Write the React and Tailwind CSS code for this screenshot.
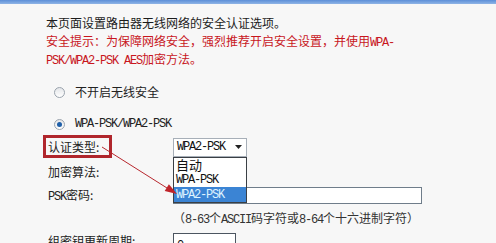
import React from 'react';

const cjk = { fontFamily: '"Noto Sans CJK SC", "Liberation Sans", sans-serif' };
const mono = { fontFamily: '"Liberation Mono", "Noto Sans CJK SC", monospace' };

function Latin({ children }) {
  return (
    <span style={mono} className="text-[12px] leading-none tracking-[-1.2px]">
      {children}
    </span>
  );
}

function Radio({ checked }) {
  return (
    <span className="w-[11px] h-[11px] rounded-full border border-[#9aa3ad] bg-gradient-to-b from-[#e4e6e9] to-[#ffffff] flex items-center justify-center">
      {checked && <span className="w-[5px] h-[5px] rounded-full bg-[#1f5fa8]" />}
    </span>
  );
}

function Row({ label, children, className = '' }) {
  return (
    <div className={`flex items-center ${className}`}>
      <div className="w-[127px] pl-[2px] text-[12px] leading-[16px] text-[#222]">{label}</div>
      {children}
    </div>
  );
}

export default function App() {
  return (
    <div className="relative w-[496px] h-[243px] overflow-hidden bg-[#f7f7f7]" style={cjk}>
      <div className="h-[4px] bg-gradient-to-b from-[#5c8fd8] to-[#8fb4e6]" />
      <div className="pl-[46px]">
        <div className="mt-[10px] text-[12px]">
          <div className="h-[18px] leading-[18px] text-[#1c1c1c]">本页面设置路由器无线网络的安全认证选项。</div>
          <div className="h-[18px] leading-[18px] text-[#c8161d]">
            安全提示：为保障网络安全，强烈推荐开启安全设置，并使用<Latin>WPA-</Latin>
          </div>
          <div className="h-[18px] leading-[18px] text-[#c8161d]">
            <Latin>PSK/WPA2-PSK AES</Latin>加密方法。
          </div>
        </div>

        <div className="mt-[15px] h-[18px] flex items-center gap-[10px] pl-[8px] text-[12px] text-[#222]">
          <Radio />
          <span>不开启无线安全</span>
        </div>
        <div className="mt-[14px] h-[18px] flex items-center gap-[10px] pl-[8px] text-[#222]">
          <Radio checked />
          <Latin>WPA-PSK/WPA2-PSK</Latin>
        </div>

        <Row label="认证类型:" className="mt-[4px] h-[20px]">
          <div className="w-[74px] h-[19px] bg-white border border-[#a7afb8] flex items-center justify-between pl-[3px] pr-[4px] text-[#111]">
            <Latin>WPA2-PSK</Latin>
            <svg width="7" height="4" viewBox="0 0 7 4"><path d="M0 0h7L3.5 4z" fill="#222" /></svg>
          </div>
        </Row>
        <Row label="加密算法:" className="mt-[5px] h-[20px]" />
        <Row label={<span><Latin>PSK</Latin>密码:</span>} className="mt-[4px] h-[18px]">
          <div className="w-[249px] h-[17px] bg-white border border-[#6f7d8a]" />
        </Row>
        <div className="mt-[5px] h-[18px] leading-[18px] pl-[127px] text-[12px] text-[#333]">
          （<Latin>8-63</Latin>个<Latin>ASCII</Latin>码字符或<Latin>8-64</Latin>个十六进制字符）
        </div>
        <Row label="组密钥更新周期:" className="mt-[6px] h-[18px] items-start">
          <div className="w-[63px] h-[18px] bg-white border border-[#4c5560] pl-[3px] leading-[16px] text-[#111]">
            <Latin>0</Latin>
          </div>
        </Row>
      </div>

      {/* opened dropdown list */}
      <div className="absolute left-[173px] top-[157px] w-[74px] h-[46px] bg-white border border-[#3a3f45] text-[#111]">
        <div className="h-[14px] leading-[14px] pl-[2px] text-[13px]">自动</div>
        <div className="h-[15px] flex items-center pl-[2px]"><Latin>WPA-PSK</Latin></div>
        <div className="h-[15px] flex items-center pl-[2px] bg-[#3b84d4] text-[#dff3ff]"><Latin>WPA2-PSK</Latin></div>
      </div>

      {/* annotation box */}
      <div className="absolute left-[43px] top-[135px] w-[69px] h-[23px] border-[3px] border-[#b0262c]" />

      {/* annotation arrow */}
      <svg className="absolute left-0 top-0" width="496" height="243" viewBox="0 0 496 243">
        <line x1="102" y1="147" x2="167" y2="188" stroke="#b8282e" strokeWidth="1" />
        <polygon points="177,194 164.7,191 168.9,184.2" fill="#c0242a" />
      </svg>
    </div>
  );
}
